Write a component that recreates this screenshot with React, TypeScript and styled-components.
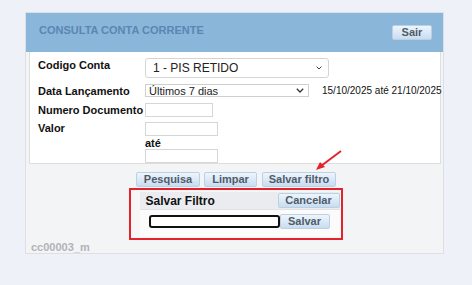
import styled, { createGlobalStyle } from 'styled-components';

const GlobalStyle = createGlobalStyle`
  body {
    margin: 0;
    background: #eef1f7;
    font-family: 'Liberation Sans', Arial, sans-serif;
  }
`;

const Page = styled.div`
  position: relative;
  width: 472px;
  height: 285px;
  padding: 12px 0 0 25px;
  box-sizing: border-box;
`;

const Panel = styled.div`
  width: 419px;
  height: 242px;
  box-sizing: border-box;
  border: 1px solid #dcdfe4;
  background: #f3f4f6;
  display: flex;
  flex-direction: column;
`;

const Header = styled.div`
  height: 39px;
  flex: none;
  background: #8ab6da;
  display: flex;
  align-items: center;
  justify-content: space-between;
  padding: 0 11px 0 13px;
`;

const Title = styled.div`
  font-size: 11px;
  font-weight: 700;
  color: #5a86b3;
  margin-top: -5px;
`;

const Button = styled.button<{ $w: number }>`
  width: ${({ $w }) => $w}px;
  height: 15px;
  padding: 0;
  border: 1px solid #bcd0e4;
  border-radius: 2px;
  background: linear-gradient(#eef5fc, #c9dcf0);
  font-family: inherit;
  font-size: 11px;
  font-weight: 700;
  color: #4e5c6b;
  line-height: 13px;
  white-space: nowrap;
`;

const FormBox = styled.div`
  margin: 0 2px 0 3px;
  height: 112px;
  flex: none;
  box-sizing: border-box;
  background: #fff;
  border: 1px solid #dedede;
  border-top: none;
  padding: 6px 0 0 8px;
  display: grid;
  grid-template-columns: 107px 1fr;
  grid-template-rows: 26px 19px 19px auto;
  font-size: 11px;
`;

const Label = styled.div<{ $pt: number }>`
  font-weight: 700;
  font-size: 11px;
  color: #111;
  white-space: nowrap;
  padding-top: ${({ $pt }) => $pt}px;
`;

const Field = styled.div`
  display: flex;
  align-items: flex-start;
  gap: 13px;
  color: #111;
`;

const SelectBig = styled.div`
  width: 184px;
  height: 20px;
  box-sizing: border-box;
  border: 1px solid #d4d4d4;
  border-radius: 3px;
  display: flex;
  align-items: center;
  justify-content: space-between;
  padding: 0 6px 0 7px;
  font-size: 12px;
  color: #222;
`;

const SelectSmall = styled.div`
  width: 164px;
  height: 13px;
  flex: none;
  box-sizing: border-box;
  border: 1px solid #cfcfcf;
  display: flex;
  align-items: center;
  justify-content: space-between;
  padding: 0 4px 0 3px;
  font-size: 11px;
  color: #222;
`;

const DateRange = styled.span`
  font-size: 10px;
  line-height: 12px;
  margin-top: 1px;
  white-space: nowrap;
`;

const Input = styled.div<{ $w: number }>`
  width: ${({ $w }) => $w}px;
  height: 14px;
  box-sizing: border-box;
  border: 1px solid #d6d6d6;
  background: #fff;
`;

const Stack = styled.div`
  display: flex;
  flex-direction: column;
`;

const Ate = styled.div`
  font-weight: 700;
  font-size: 11px;
  line-height: 10px;
  margin: 2px 0 1px;
  color: #111;
`;

const Actions = styled.div`
  display: flex;
  justify-content: center;
  gap: 4px;
  margin-top: 8px;
  padding-left: 3px;
  & > button:last-child {
    margin-left: 1px;
  }
`;

const Highlight = styled.div`
  width: 214px;
  height: 52px;
  box-sizing: border-box;
  margin: 1px auto 0;
  position: relative;
  left: 1px;
  border: 2px solid #e3232b;
  padding: 2px 1px 2px 9px;
  background: #f6f6f7;
`;

const SavePanel = styled.div`
  height: 100%;
  background: #fbfbfb;
  display: flex;
  flex-direction: column;
`;

const SaveHeader = styled.div`
  height: 17px;
  background: #eaecef;
  border-bottom: 1px solid #dfe2e6;
  display: flex;
  align-items: center;
  justify-content: space-between;
  padding: 0 0 0 6px;
  font-weight: 700;
  font-size: 12px;
  color: #111;
`;

const SaveBody = styled.div`
  display: flex;
  align-items: center;
  padding: 4px 0 0 9px;
`;

const NameInput = styled.div`
  width: 131px;
  height: 13px;
  box-sizing: border-box;
  border: 2px solid #111;
  border-radius: 3px;
  background: #fff;
`;

const Footer = styled.div`
  margin-top: auto;
  padding: 0 0 1px 5px;
  font-size: 11px;
  line-height: 10px;
  font-weight: 700;
  color: #b1b3b6;
`;

const Arrow = styled.svg`
  position: absolute;
  left: 312px;
  top: 148px;
`;

const Chevron = ({ size }: { size: number }) => (
  <svg width={size} height={size * 0.6} viewBox="0 0 10 6">
    <path d="M1 1 L5 5 L9 1" fill="none" stroke="#333" strokeWidth="1.6" />
  </svg>
);

export default function App() {
  return (
    <Page>
      <GlobalStyle />
      <Panel>
        <Header>
          <Title>CONSULTA CONTA CORRENTE</Title>
          <Button $w={40}>Sair</Button>
        </Header>
        <FormBox>
          <Label $pt={1}>Codigo Conta</Label>
          <Field>
            <SelectBig>
              <span>1 - PIS RETIDO</span>
              <Chevron size={6} />
            </SelectBig>
          </Field>
          <Label $pt={1}>Data Lançamento</Label>
          <Field>
            <SelectSmall>
              <span>Últimos 7 dias</span>
              <Chevron size={8} />
            </SelectSmall>
            <DateRange>15/10/2025 até 21/10/2025</DateRange>
          </Field>
          <Label $pt={1}>Numero Documento</Label>
          <Field>
            <Input $w={68} />
          </Field>
          <Label $pt={0}>Valor</Label>
          <Stack>
            <Input $w={73} />
            <Ate>até</Ate>
            <Input $w={73} />
          </Stack>
        </FormBox>
        <Actions>
          <Button $w={64}>Pesquisa</Button>
          <Button $w={53}>Limpar</Button>
          <Button $w={74}>Salvar filtro</Button>
        </Actions>
        <Highlight>
          <SavePanel>
            <SaveHeader>
              <span>Salvar Filtro</span>
              <Button $w={62}>Cancelar</Button>
            </SaveHeader>
            <SaveBody>
              <NameInput />
              <Button $w={50}>Salvar</Button>
            </SaveBody>
          </SavePanel>
        </Highlight>
        <Footer>cc00003_m</Footer>
      </Panel>
      <Arrow width="34" height="26" viewBox="0 0 34 26">
        <line x1="29" y1="3" x2="9" y2="18" stroke="#e3232b" strokeWidth="2" />
        <polygon points="4,22 8,14 13,19" fill="#e3232b" />
      </Arrow>
    </Page>
  );
}
